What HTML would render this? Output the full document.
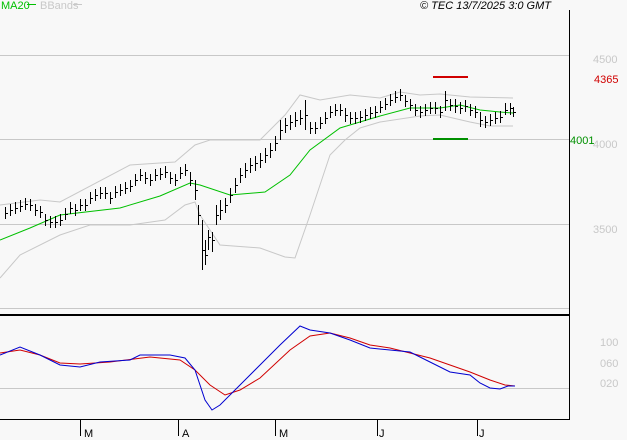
<!DOCTYPE html><html><head><style>body{margin:0;background:#f8f8f8}svg{display:block}text{font-family:"Liberation Sans",sans-serif;font-size:11px}</style></head><body>
<svg width="627" height="440" xmlns="http://www.w3.org/2000/svg">
<rect width="627" height="440" fill="#f8f8f8"/>
<g stroke="#c8c8c8" stroke-width="1"><path d="M0 55.5H569M0 139.5H569M0 224.5H569M0 308.5H569M0 388.5H569"/></g>
<text x="1" y="9" fill="#00c000">MA20</text><path d="M27 4.5H36" stroke="#00c000"/>
<text x="40" y="9" fill="#c8c8c8">BBands</text><path d="M73 4.5H82" stroke="#c8c8c8"/>
<text x="420" y="9" fill="#000" font-style="italic">© TEC 13/7/2025 3:0 GMT</text>
<path d="M569.5 10V419" stroke="#000"/>
<path d="M0 315H570" stroke="#000" stroke-width="2"/>
<path d="M0 419.5H570" stroke="#000"/>
<g fill="none" stroke="#c8c8c8"><polyline points="0,205 40,200 60,202 130,165 175,162 195,145 210,140 260,140 285,115 300,95 320,100 350,95 380,98 400,92 420,95 440,94 470,97 513,98"/><polyline points="0,278 20,255 60,235 90,225 130,225 165,220 185,205 195,202 200,215 220,245 260,248 285,257 295,258 310,215 330,155 345,140 360,128 380,122 420,116 440,115 470,122 490,126 513,126"/></g>
<polyline fill="none" stroke="#00c000" points="0,240 30,228 60,215 120,208 160,196 190,183 200,185 230,195 265,192 290,175 310,150 340,128 380,116 410,108 440,108 460,105 480,110 500,112 513,113"/>
<g shape-rendering="crispEdges" transform="translate(0.5,0)">
<path stroke="#000" fill="none" d="M5 207v12M10 204v12M15 202v12M20 200v12M25 198v12M30 199v12M35 204v12M40 206v12M45 214v12M50 216v12M55 216v12M60 214v12M65 208v12M70 202v12M75 204v12M80 199v12M85 199v12M90 192v12M95 189v12M100 187v12M105 187v12M110 192v12M115 186v12M120 184v12M125 182v12M130 180v12M135 174v12M140 169v12M145 172v12M150 174v12M155 169v12M160 168v12M165 166v12M170 172v12M175 174v12M180 167v12M185 164v12M190 172v14M195 180v20M198 205v20M202 220v50M205 240v25M208 230v20M212 232v20M216 205v20M220 200v20M225 198v15M230 188v15M235 178v15M240 168v15M245 163v15M250 158v15M255 156v15M260 153v15M265 148v15M270 143v15M275 136v15M280 120v20M285 118v15M290 115v15M295 112v15M300 110v15M305 100v30M310 122v12M315 122v12M320 117v12M325 112v12M330 106v12M335 104v12M340 104v12M345 108v14M350 112v12M355 112v12M360 111v12M365 109v12M370 107v12M375 106v12M380 101v12M385 98v12M390 94v12M395 91v12M400 89v12M405 95v12M410 99v12M415 104v12M420 106v12M425 104v12M430 102v12M435 102v12M440 106v12M445 91v20M450 99v12M455 99v14M460 102v12M465 100v12M470 104v12M475 106v12M480 112v15M485 116v12M490 114v12M495 112v12M500 111v12M505 103v12M510 103v12M513 107v10"/>
</g>
<path stroke="#000" shape-rendering="crispEdges" d="M5 213.5h3M10 210.5h3M15 208.5h3M20 206.5h3M25 204.5h3M30 205.5h3M35 210.5h3M40 212.5h3M45 220.5h3M50 222.5h3M55 222.5h3M60 220.5h3M65 214.5h3M70 208.5h3M75 210.5h3M80 205.5h3M85 205.5h3M90 198.5h3M95 195.5h3M100 193.5h3M105 193.5h3M110 198.5h3M115 192.5h3M120 190.5h3M125 188.5h3M130 186.5h3M135 180.5h3M140 175.5h3M145 178.5h3M150 180.5h3M155 175.5h3M160 174.5h3M165 172.5h3M170 178.5h3M175 180.5h3M180 173.5h3M185 170.5h3M190 180.5h3M195 190.5h3M198 215.5h3M202 250.5h3M205 255.5h3M208 237.5h3M212 240.5h3M216 215.5h3M220 210.5h3M225 205.5h3M230 195.5h3M235 185.5h3M240 175.5h3M245 170.5h3M250 165.5h3M255 163.5h3M260 160.5h3M265 155.5h3M270 150.5h3M275 143.5h3M280 130.5h3M285 125.5h3M290 122.5h3M295 120.5h3M300 118.5h3M305 115.5h3M310 128.5h3M315 128.5h3M320 123.5h3M325 118.5h3M330 112.5h3M335 110.5h3M340 110.5h3M345 115.5h3M350 118.5h3M355 118.5h3M360 117.5h3M365 115.5h3M370 113.5h3M375 112.5h3M380 107.5h3M385 104.5h3M390 100.5h3M395 97.5h3M400 95.5h3M405 101.5h3M410 105.5h3M415 110.5h3M420 112.5h3M425 110.5h3M430 108.5h3M435 108.5h3M440 112.5h3M445 100.5h3M450 105.5h3M455 106.5h3M460 108.5h3M465 106.5h3M470 110.5h3M475 112.5h3M480 120.5h3M485 122.5h3M490 120.5h3M495 118.5h3M500 117.5h3M505 110.5h3M510 108.5h3M513 112.5h3"/>
<path d="M433 77H468" stroke="#d00000" stroke-width="2"/><path d="M433 139H468" stroke="#009000" stroke-width="2"/>
<text x="594" y="83" fill="#d00000">4365</text>
<text x="570" y="144" fill="#009000">4001</text>
<g fill="#c8c8c8"><text x="593" y="63">4500</text><text x="593" y="148">4000</text><text x="593" y="233">3500</text><text x="600" y="346">100</text><text x="600" y="367">060</text><text x="600" y="387">020</text></g>
<polyline fill="none" stroke="#d00000" points="0,353 20,350 40,355 60,363 80,364 110,362 150,357 180,360 195,370 210,385 225,395 240,390 260,378 290,350 310,336 330,333 350,338 370,345 390,348 410,353 430,358 450,365 470,372 490,380 505,385 515,386"/>
<polyline fill="none" stroke="#0000d0" points="0,355 20,347 40,355 60,365 80,367 100,362 130,360 140,355 170,355 185,358 195,370 205,400 212,410 220,405 240,385 260,365 280,345 300,326 310,330 330,333 350,340 370,348 390,350 410,352 430,362 450,372 470,375 480,383 490,388 500,389 508,386 515,386"/>
<g stroke="#000"><path d="M80.5 419V436M178.5 419V436M275.5 419V436M377.5 419V436M477.5 419V436"/></g>
<g fill="#000"><text x="84" y="437">M</text><text x="182" y="437">A</text><text x="279" y="437">M</text><text x="379" y="437">J</text><text x="479" y="437">J</text></g>
</svg></body></html>
